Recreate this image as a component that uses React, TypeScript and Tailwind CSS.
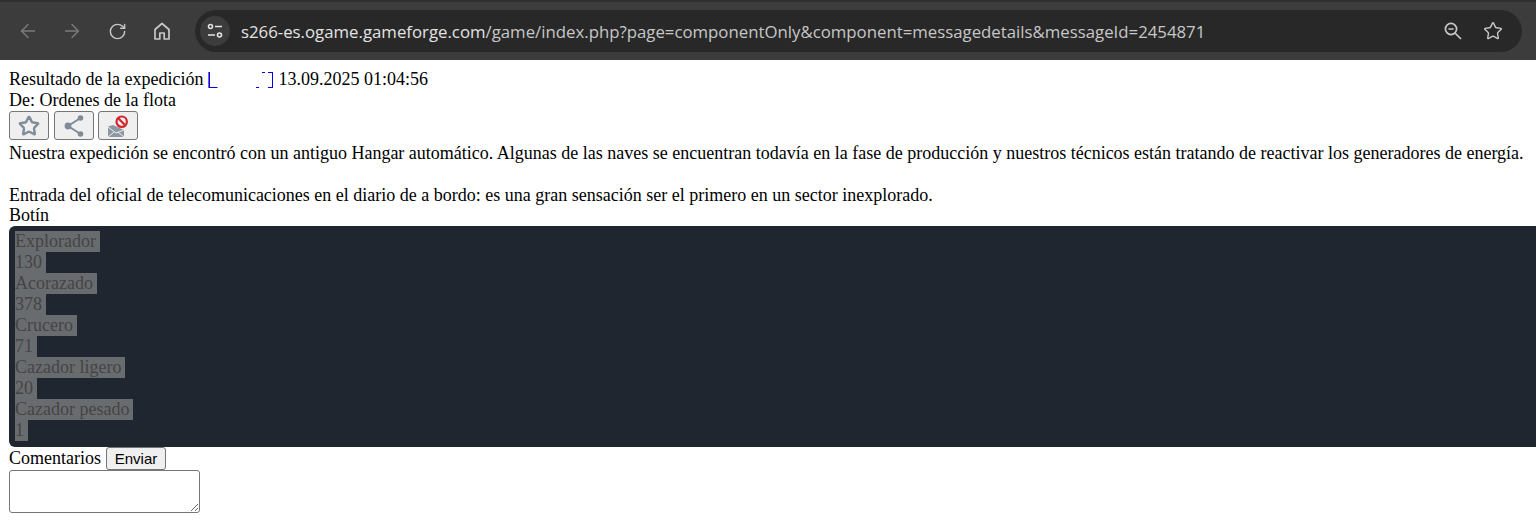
import { ArrowLeft, ArrowRight, RotateCw, Star } from "lucide-react";

const loot = ["Explorador", "130", "Acorazado", "378", "Crucero", "71", "Cazador ligero", "20", "Cazador pesado", "1"];

function HomeIcon() {
  return (
    <svg width="20" height="20" viewBox="0 0 20 20" fill="none" stroke="#c7c7c7" strokeWidth="1.7" strokeLinejoin="round">
      <path d="M3 8.5 10 2.5l7 6V18h-4.8v-6H7.8v6H3z" />
    </svg>
  );
}

function TuneIcon() {
  return (
    <svg width="18" height="18" viewBox="0 0 18 18" fill="none" stroke="#e3e3e3" strokeWidth="1.6">
      <circle cx="4.5" cy="4.5" r="2" />
      <path d="M9 4.5h7M2 13h7" />
      <circle cx="13.5" cy="13" r="2" />
    </svg>
  );
}

function ZoomOutIcon() {
  return (
    <svg width="20" height="20" viewBox="0 0 20 20" fill="none" stroke="#c7c7c7" strokeWidth="1.7">
      <circle cx="8" cy="8" r="5.6" />
      <path d="M5.4 8h5.2M12 12l6 6" />
    </svg>
  );
}

function LinkMarks() {
  return (
    <svg width="66" height="21" viewBox="0 0 66 21" fill="none" stroke="#0000ee" strokeWidth="1" className="inline-block align-top">
      <path d="M0.5 3v16" stroke="#7a5fd0" />
      <path d="M1.5 3v16M1.5 18.5h8M48 18.5h3M54 3.5h3M60 3.5h4M64.5 3v16M60 18.5h4" />
    </svg>
  );
}

function ShareIcon() {
  return (
    <svg width="24" height="24" viewBox="0 0 24 24" fill="#7f8c99" stroke="#7f8c99" strokeWidth="2">
      <path d="M6 12 18.5 4M6 12l12.5 8" fill="none" />
      <circle cx="18.5" cy="4" r="2.8" stroke="none" />
      <circle cx="6" cy="12" r="3.4" stroke="none" />
      <circle cx="18.5" cy="20" r="2.8" stroke="none" />
    </svg>
  );
}

function BlockMailIcon() {
  return (
    <svg width="24" height="27" viewBox="0 0 24 27" fill="none">
      <path d="M2 14.5l5-1.5 11 5v7H2z" fill="#8d98a3" />
      <path d="M2 15l8 6 8-3M2 25l6-5M18 25l-6-5" stroke="#eeeeee" strokeWidth="1" />
      <circle cx="15.7" cy="9.7" r="5.2" fill="#eeeeee" stroke="#d3262c" strokeWidth="2.2" />
      <path d="M12.2 6.2l7 7" stroke="#d3262c" strokeWidth="2.2" />
    </svg>
  );
}

const iconButton = "flex h-[29px] w-10 items-center justify-center overflow-hidden rounded-[3px] border border-[#767676] bg-[#efefef]";

export default function App() {
  return (
    <div className="h-[532px] overflow-hidden bg-white font-['Liberation_Serif',serif] text-[18px] leading-[21px] text-black">
      <header className="flex h-[60px] items-center border-t-2 border-[#2f2f2f] bg-[#3c3c3c] pr-[14px] pl-[17px]">
        <ArrowLeft className="h-[22px] w-[22px] text-[#7b7b7b]" strokeWidth={1.6} />
        <ArrowRight className="ml-[22px] h-[22px] w-[22px] text-[#7b7b7b]" strokeWidth={1.6} />
        <RotateCw className="ml-[25px] h-[19px] w-[19px] text-[#c7c7c7]" strokeWidth={1.8} />
        <div className="ml-[25px]"><HomeIcon /></div>
        <div className="ml-[23px] flex h-[42px] min-w-0 flex-1 items-center rounded-full bg-[#282828] pr-[19px] pl-[5px]">
          <div className="flex h-[30px] w-[30px] items-center justify-center rounded-full bg-[#3c3c3c]"><TuneIcon /></div>
          <div className="ml-[11px] flex-1 truncate font-['Open_Sans',sans-serif] text-[16.8px] text-[#c7c7c7]">
            <span className="text-[#e3e3e3]">s266-es.ogame.gameforge.com</span>/game/index.php?page=componentOnly&amp;component=messagedetails&amp;messageId=2454871
          </div>
          <ZoomOutIcon />
          <Star className="ml-[20px] h-[20px] w-[20px] text-[#c7c7c7]" strokeWidth={1.7} />
        </div>
      </header>

      <main className="pt-[9px] pl-[9px]">
        <div>
          Resultado de la expedición <a className="inline-block h-[21px] w-[66px] align-top"><LinkMarks /></a> 13.09.2025 01:04:56
        </div>
        <div>De: Ordenes de la flota</div>
        <div className="flex pb-[3px]">
          <button className={iconButton}><Star className="h-[22px] w-[22px] text-[#7f8c99]" strokeWidth={2.6} /></button>
          <button className={`${iconButton} ml-[5px]`}><ShareIcon /></button>
          <button className={`${iconButton} ml-1`}><BlockMailIcon /></button>
        </div>
        <div className="whitespace-nowrap">
          Nuestra expedición se encontró con un antiguo Hangar automático. Algunas de las naves se encuentran todavía en la fase de producción y nuestros técnicos están tratando de reactivar los generadores de energía.
        </div>
        <div className="h-[21px]" />
        <div>Entrada del oficial de telecomunicaciones en el diario de a bordo: es una gran sensación ser el primero en un sector inexplorado.</div>
        <div className="h-5 leading-[19px]">Botín</div>
        <section className="rounded-l-md bg-[#1f2630] pt-[5px] pb-[6px] pl-[6px] text-[#444444]">
          {loot.map((item, i) => (
            <div key={i}>
              <span className="inline-block bg-[#696c6f] pr-1">{item}</span>
            </div>
          ))}
        </section>
        <div className="flex items-start gap-[5px] leading-[23px]">
          <span>Comentarios</span>
          <button className="h-[23px] w-[60px] rounded-[3px] border border-[#767676] bg-[#efefef] font-['Liberation_Sans',sans-serif] text-[15px] leading-none">Enviar</button>
        </div>
        <textarea className="block h-[43px] w-[191px] rounded-[3px] border border-[#767676] bg-white" />
      </main>
    </div>
  );
}
